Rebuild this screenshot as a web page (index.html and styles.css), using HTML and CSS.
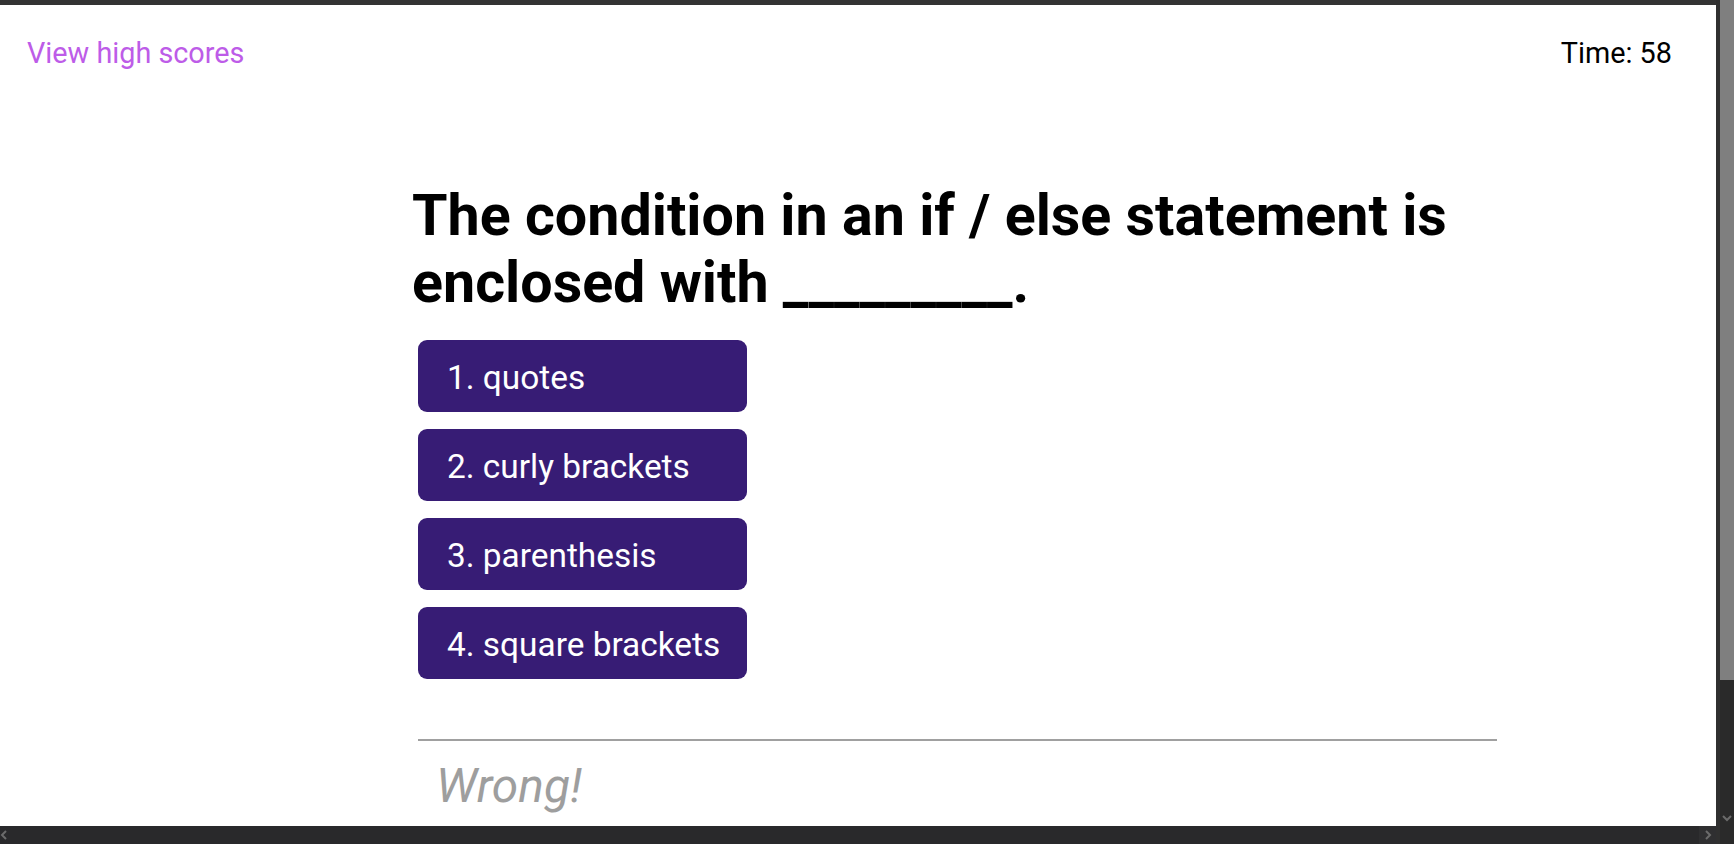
FILE: index.html
```html
<!DOCTYPE html>
<html lang="en">
<head>
<meta charset="utf-8">
<title>Code Quiz</title>
<link rel="stylesheet" href="styles.css">
</head>
<body>
<div class="window">
  <div class="page-col">
    <div class="topband"></div>
    <div class="viewport">
      <header class="topbar">
        <a class="highscores" href="#">View high scores</a>
        <div class="timer">Time: 58</div>
      </header>
      <main class="quiz">
        <h1 class="question">The condition in an if / else statement is enclosed with _________.</h1>
        <div class="choices">
          <button class="choice">1. quotes</button>
          <button class="choice">2. curly brackets</button>
          <button class="choice">3. parenthesis</button>
          <button class="choice">4. square brackets</button>
        </div>
        <div class="feedback">
          <p class="result">Wrong!</p>
        </div>
      </main>
    </div>
    <div class="hscroll">
      <span class="harrow harrow-left"><svg width="8" height="10" viewBox="0 0 8 10"><path d="M6 1 L2 5 L6 9" fill="none" stroke="#6b6b6b" stroke-width="2"/></svg></span>
      <span class="hspace"></span>
      <span class="harrow harrow-right"><svg width="8" height="10" viewBox="0 0 8 10"><path d="M2 1 L6 5 L2 9" fill="none" stroke="#6b6b6b" stroke-width="2"/></svg></span>
    </div>
  </div>
  <div class="vscroll">
    <div class="vthumb"></div>
    <div class="vtrack"></div>
    <div class="varrow"><svg width="10" height="8" viewBox="0 0 10 8"><path d="M1 2 L5 6 L9 2" fill="none" stroke="#6b6b6b" stroke-width="2"/></svg></div>
    <div class="corner"></div>
  </div>
</div>
</body>
</html>
```

FILE: styles.css
```css
* {
  box-sizing: border-box;
}

html, body {
  margin: 0;
  padding: 0;
  height: 844px;
  overflow: hidden;
  background: #333333;
  font-family: Roboto, "Noto Sans", "Liberation Sans", sans-serif;
}

.window {
  display: flex;
  width: 1734px;
  height: 844px;
}

.page-col {
  flex: 1;
  display: flex;
  flex-direction: column;
  min-width: 0;
}

.topband {
  height: 5px;
  background: #333333;
  flex: none;
}

.viewport {
  flex: 1;
  background: #ffffff;
  overflow: hidden;
}

.topbar {
  display: flex;
  justify-content: space-between;
  align-items: flex-start;
  padding: 32px 44px 0 27px;
  font-size: 28.8px;
  line-height: 33px;
}

.highscores {
  color: #bd5ce8;
  text-decoration: none;
}

.timer {
  color: #000000;
}

.quiz {
  padding-top: 112px;
  margin-left: 412px;
  width: 1085px;
}

.question {
  margin: 0;
  font-size: 57.4px;
  line-height: 67px;
  font-weight: 700;
  color: #000000;
}

.choices {
  margin-top: 24px;
  margin-left: 6px;
  width: 329px;
  display: flex;
  flex-direction: column;
  gap: 17px;
}

.choice {
  font-family: Roboto, "Noto Sans", "Liberation Sans", sans-serif;
  font-size: 33.4px;
  line-height: 38px;
  padding: 19px 24px 15px 29px;
  border: none;
  border-radius: 9px;
  background: #371c75;
  color: #ffffff;
  text-align: left;
  white-space: nowrap;
  cursor: pointer;
}

.feedback {
  margin-top: 60px;
  margin-left: 6px;
  width: 1079px;
  border-top: 2px solid #a0a0a0;
}

.result {
  margin: 0;
  padding: 18px 0 0 18px;
  font-size: 47.8px;
  line-height: 54px;
  font-style: italic;
  color: #9e9e9e;
}

.hscroll {
  height: 18px;
  flex: none;
  display: flex;
  background: #29292b;
}

.harrow {
  width: 17px;
  display: flex;
  align-items: center;
  justify-content: center;
}

.harrow-left {
  width: 8px;
  justify-content: flex-start;
}

.harrow-right {
  background: #2f2f31;
}

.hspace {
  flex: 1;
}

.vscroll {
  width: 18px;
  flex: none;
  display: flex;
  flex-direction: column;
  border-left: 4px solid #303030;
  background: #2a2a2a;
}

.vthumb {
  height: 680px;
  background: #7f7f7f;
}

.vtrack {
  flex: 1;
}

.varrow {
  height: 16px;
  display: flex;
  align-items: center;
  justify-content: center;
}

.corner {
  height: 18px;
  background: #2a2a2a;
}
```
